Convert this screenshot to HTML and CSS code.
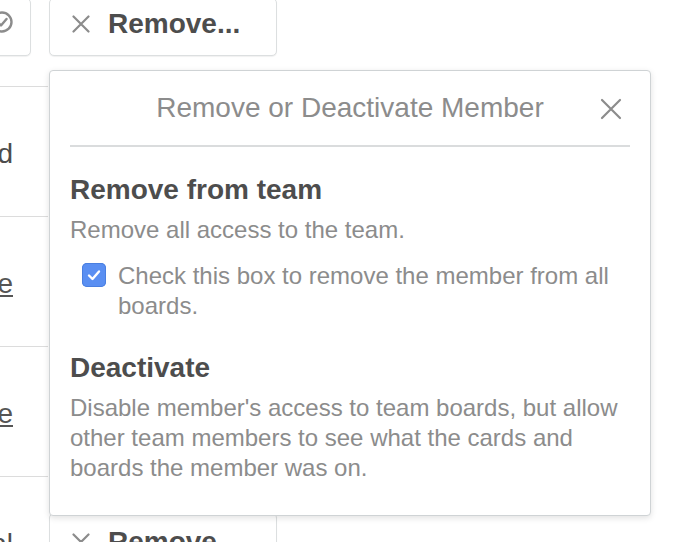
FILE: index.html
```html
<!DOCTYPE html>
<html lang="en">
<head>
<meta charset="utf-8">
<title>Remove or Deactivate Member</title>
<link rel="stylesheet" href="styles.css">
</head>
<body>
<div class="board">
  <div class="col-names">
    <div class="cell first">
      <button class="btn btn-icon" type="button">
        <svg class="icon-circle" width="24" height="24" viewBox="0 0 24 24" aria-hidden="true">
          <circle cx="12" cy="12" r="9.5" fill="none" stroke="#8c8c8c" stroke-width="2.4"/>
          <path d="M8 12.5 L11 15.5 L16.5 9" fill="none" stroke="#8c8c8c" stroke-width="2.4" stroke-linecap="round" stroke-linejoin="round"/>
        </svg>
      </button>
    </div>
    <div class="cell"><span class="name">Invited</span></div>
    <div class="cell"><a class="name link" href="#">Leave</a></div>
    <div class="cell"><a class="name link" href="#">Remove</a></div>
    <div class="cell"><span class="name">Normal</span></div>
  </div>
  <div class="col-actions">
    <button class="btn btn-remove" type="button">
      <svg class="x-icon" width="18" height="18" viewBox="0 0 18 18" aria-hidden="true"><path d="M1.5 1.5 L16.5 16.5 M16.5 1.5 L1.5 16.5" stroke="#8c8c8c" stroke-width="2.2" stroke-linecap="round"/></svg>
      <span>Remove...</span>
    </button>
    <button class="btn btn-remove btn-bottom" type="button">
      <svg class="x-icon" width="18" height="18" viewBox="0 0 18 18" aria-hidden="true"><path d="M1.5 1.5 L16.5 16.5 M16.5 1.5 L1.5 16.5" stroke="#8c8c8c" stroke-width="2.2" stroke-linecap="round"/></svg>
      <span>Remove...</span>
    </button>
  </div>
</div>

<div class="popover">
  <div class="pop-header">
    <span class="pop-title">Remove or Deactivate Member</span>
    <a class="pop-close" href="#" aria-label="Close">
      <svg width="22" height="22" viewBox="0 0 22 22" aria-hidden="true"><path d="M2 2 L20 20 M20 2 L2 20" stroke="#8c8c8c" stroke-width="2.2" stroke-linecap="round"/></svg>
    </a>
  </div>
  <div class="pop-body">
    <h3 class="sec-title">Remove from team</h3>
    <p class="sec-text">Remove all access to the team.</p>
    <label class="check-row">
      <span class="checkbox">
        <svg width="24" height="24" viewBox="0 0 24 24" aria-hidden="true"><path d="M7 12.5 L10.5 16 L17 8.5" fill="none" stroke="#fff" stroke-width="2.4" stroke-linecap="round" stroke-linejoin="round"/></svg>
      </span>
      <span class="check-text">Check this box to remove the member from all boards.</span>
    </label>
    <h3 class="sec-title deact">Deactivate</h3>
    <p class="sec-text">Disable member's access to team boards, but allow other team members to see what the cards and boards the member was on.</p>
  </div>
</div>
</body>
</html>
```

FILE: styles.css
```css
html, body {
  margin: 0;
  padding: 0;
  background: #fff;
}
body {
  width: 676px;
  height: 542px;
  overflow: hidden;
  position: relative;
  font-family: "Liberation Sans", Arial, sans-serif;
  color: #4d4d4d;
}

.board {
  display: flex;
  align-items: flex-start;
}

.col-names {
  width: 48px;
  flex: none;
}
.cell {
  box-sizing: border-box;
  height: 130px;
  border-bottom: 1px solid #dcdcdc;
  display: flex;
  align-items: center;
  justify-content: flex-end;
  padding-right: 35px;
  overflow: hidden;
  padding-top: 4px;
}
.cell.first {
  height: 87px;
  padding: 0;
  align-items: flex-start;
  justify-content: flex-start;
  overflow: visible;
}
.name {
  font-size: 28px;
  white-space: nowrap;
  color: #4d4d4d;
  line-height: 34px;
}
.link {
  color: #555;
  text-decoration: underline;
}

.btn {
  box-sizing: border-box;
  display: flex;
  align-items: center;
  background: #fff;
  border: 1px solid #dcdfe0;
  border-radius: 5px;
  box-shadow: 0 1px 1px rgba(0, 0, 0, 0.06);
  font-family: inherit;
  padding: 0;
  cursor: pointer;
}
.btn-icon {
  width: 42px;
  height: 58px;
  margin-top: -2px;
  margin-left: -11px;
  padding-left: 0;
}
.icon-circle {
  display: block;
  margin-left: 0;
  margin-top: -10px;
}

.col-actions {
  width: 228px;
  margin-left: 1px;
  flex: none;
}
.btn-remove {
  width: 228px;
  height: 58px;
  margin-top: -2px;
  padding-left: 22px;
  padding-bottom: 6px;
  gap: 18px;
  font-size: 28px;
  font-weight: bold;
  color: #4d4d4d;
}
.btn-bottom {
  margin-top: 457px;
  padding-bottom: 0;
}
.x-icon {
  display: block;
  flex: none;
}

.popover {
  position: absolute;
  left: 49px;
  top: 70px;
  width: 602px;
  box-sizing: border-box;
  background: #fff;
  border: 1px solid #cfd3d5;
  border-radius: 4px;
  box-shadow: 0 2px 6px rgba(0, 0, 0, 0.12);
  padding: 0 20px 32px;
}
.pop-header {
  position: relative;
  height: 74px;
  border-bottom: 2px solid #dadcdd;
  display: flex;
  align-items: center;
  justify-content: center;
}
.pop-title {
  font-size: 28px;
  line-height: 40px;
  color: #8c8c8c;
  margin-top: 0;
}
.pop-close {
  position: absolute;
  right: 8px;
  top: 27px;
  display: block;
  line-height: 0;
}

.pop-body {
  padding-top: 25px;
}
.sec-title {
  margin: 0;
  font-size: 28px;
  line-height: 36px;
  font-weight: bold;
  color: #4d4d4d;
}
.sec-title.deact {
  margin-top: 29px;
}
.sec-text {
  margin: 7px 0 0;
  font-size: 24px;
  line-height: 30px;
  color: #8c8c8c;
}
.check-row {
  display: flex;
  align-items: flex-start;
  margin-top: 16px;
  padding-left: 12px;
  gap: 12px;
}
.checkbox {
  flex: none;
  width: 24px;
  height: 24px;
  margin-top: 2px;
  border-radius: 5px;
  background: #5a8ff2;
  box-shadow: inset 0 0 0 1px #4a7fe0;
  line-height: 0;
}
.check-text {
  font-size: 24px;
  line-height: 30px;
  color: #8c8c8c;
  width: 500px;
}
```
